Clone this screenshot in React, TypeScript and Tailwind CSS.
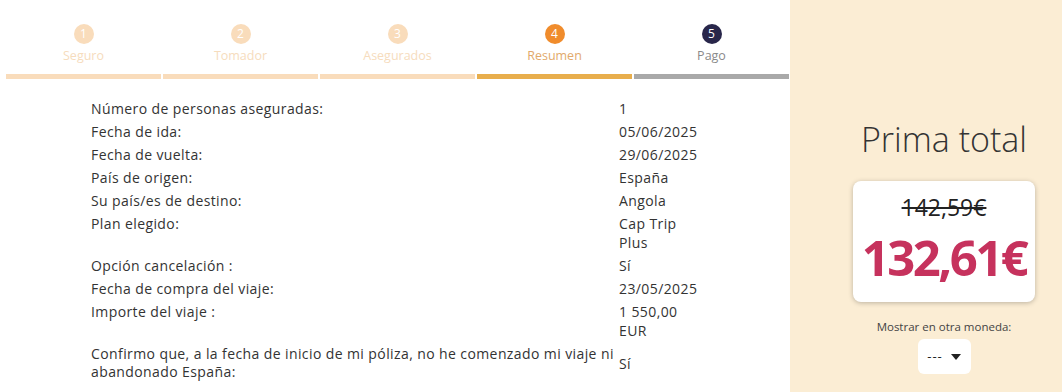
import React from "react";

const steps = [
  { n: 1, label: "Seguro", state: "done" },
  { n: 2, label: "Tomador", state: "done" },
  { n: 3, label: "Asegurados", state: "done" },
  { n: 4, label: "Resumen", state: "active" },
  { n: 5, label: "Pago", state: "next" },
];

const rows: [string, string[]][] = [
  ["Número de personas aseguradas:", ["1"]],
  ["Fecha de ida:", ["05/06/2025"]],
  ["Fecha de vuelta:", ["29/06/2025"]],
  ["País de origen:", ["España"]],
  ["Su país/es de destino:", ["Angola"]],
  ["Plan elegido:", ["Cap Trip", "Plus"]],
  ["Opción cancelación :", ["Sí"]],
  ["Fecha de compra del viaje:", ["23/05/2025"]],
  ["Importe del viaje :", ["1 550,00", "EUR"]],
];

export default function App() {
  return (
    <div
      className="flex w-[1062px] h-[392px] overflow-hidden bg-white text-[#333]"
      style={{ fontFamily: "'Open Sans', 'Noto Sans', sans-serif" }}
    >
      <div className="w-[790px] shrink-0 pl-[6px] pr-[1px]">
        <div className="flex gap-[2px] pt-[24px]">
          {steps.map((s) => (
            <div key={s.n} className="flex-1 flex flex-col items-center">
              <div
                className={
                  "w-[20px] h-[20px] rounded-full flex items-center justify-center text-[12px] text-white " +
                  (s.state === "done"
                    ? "bg-[#f9dcbb]"
                    : s.state === "active"
                    ? "bg-[#f08c2c]"
                    : "bg-[#28264a]")
                }
              >
                {s.n}
              </div>
              <div
                className={
                  "text-[12.5px] leading-[16px] mt-[4px] " +
                  (s.state === "done"
                    ? "text-[#f6dcbd]"
                    : s.state === "active"
                    ? "text-[#e2a96b]"
                    : "text-[#8a8a8a]")
                }
              >
                {s.label}
              </div>
              <div
                className={
                  "w-full h-[5px] mt-[10px] " +
                  (s.state === "done"
                    ? "bg-[#f9dcbb]"
                    : s.state === "active"
                    ? "bg-[#e8ae4c]"
                    : "bg-[#a9a9a9]")
                }
              />
            </div>
          ))}
        </div>
        <div className="pl-[85px] pt-[20px] text-[14px] leading-[19px] tracking-[0.4px] text-[#333]">
          {rows.map(([k, v]) => (
            <div key={k} className="flex mb-[4px]">
              <div className="w-[528px]">{k}</div>
              <div className="w-[90px]">
                {v.map((x) => (
                  <div key={x}>{x}</div>
                ))}
              </div>
            </div>
          ))}
          <div className="flex items-center mt-[5px]">
            <div className="w-[528px] leading-[18px]">
              Confirmo que, a la fecha de inicio de mi póliza, no he comenzado mi viaje ni abandonado España:
            </div>
            <div>Sí</div>
          </div>
        </div>
      </div>
      <div className="flex-1 bg-[#fbedd4] flex flex-col items-center pt-[118px] pl-[36px]">
        <div className="text-[34px] leading-[42px] font-light text-[#333]">Prima total</div>
        <div className="mt-[21px] w-[182px] h-[121px] bg-white rounded-[8px] shadow-[0_1px_5px_rgba(0,0,0,0.25)] flex flex-col items-center pt-[12px]">
          <div className="text-[23px] leading-[28px] line-through text-[#222]">142,59€</div>
          <div className="text-[49px] leading-[66px] font-bold text-[#c6325d] tracking-[-2.5px] mt-[3px]">132,61€</div>
        </div>
        <div className="mt-[18px] text-[11.5px] leading-[14px] text-[#444]">Mostrar en otra moneda:</div>
        <div className="mt-[5px] w-[53px] h-[35px] bg-white rounded-[6px] flex items-center justify-center gap-[8px] text-[13px] text-[#222]">
          <span className="tracking-[1px]">---</span>
          <svg width="10" height="6" viewBox="0 0 10 6">
            <path d="M0 0 L10 0 L5 6 Z" fill="#222" />
          </svg>
        </div>
      </div>
    </div>
  );
}
